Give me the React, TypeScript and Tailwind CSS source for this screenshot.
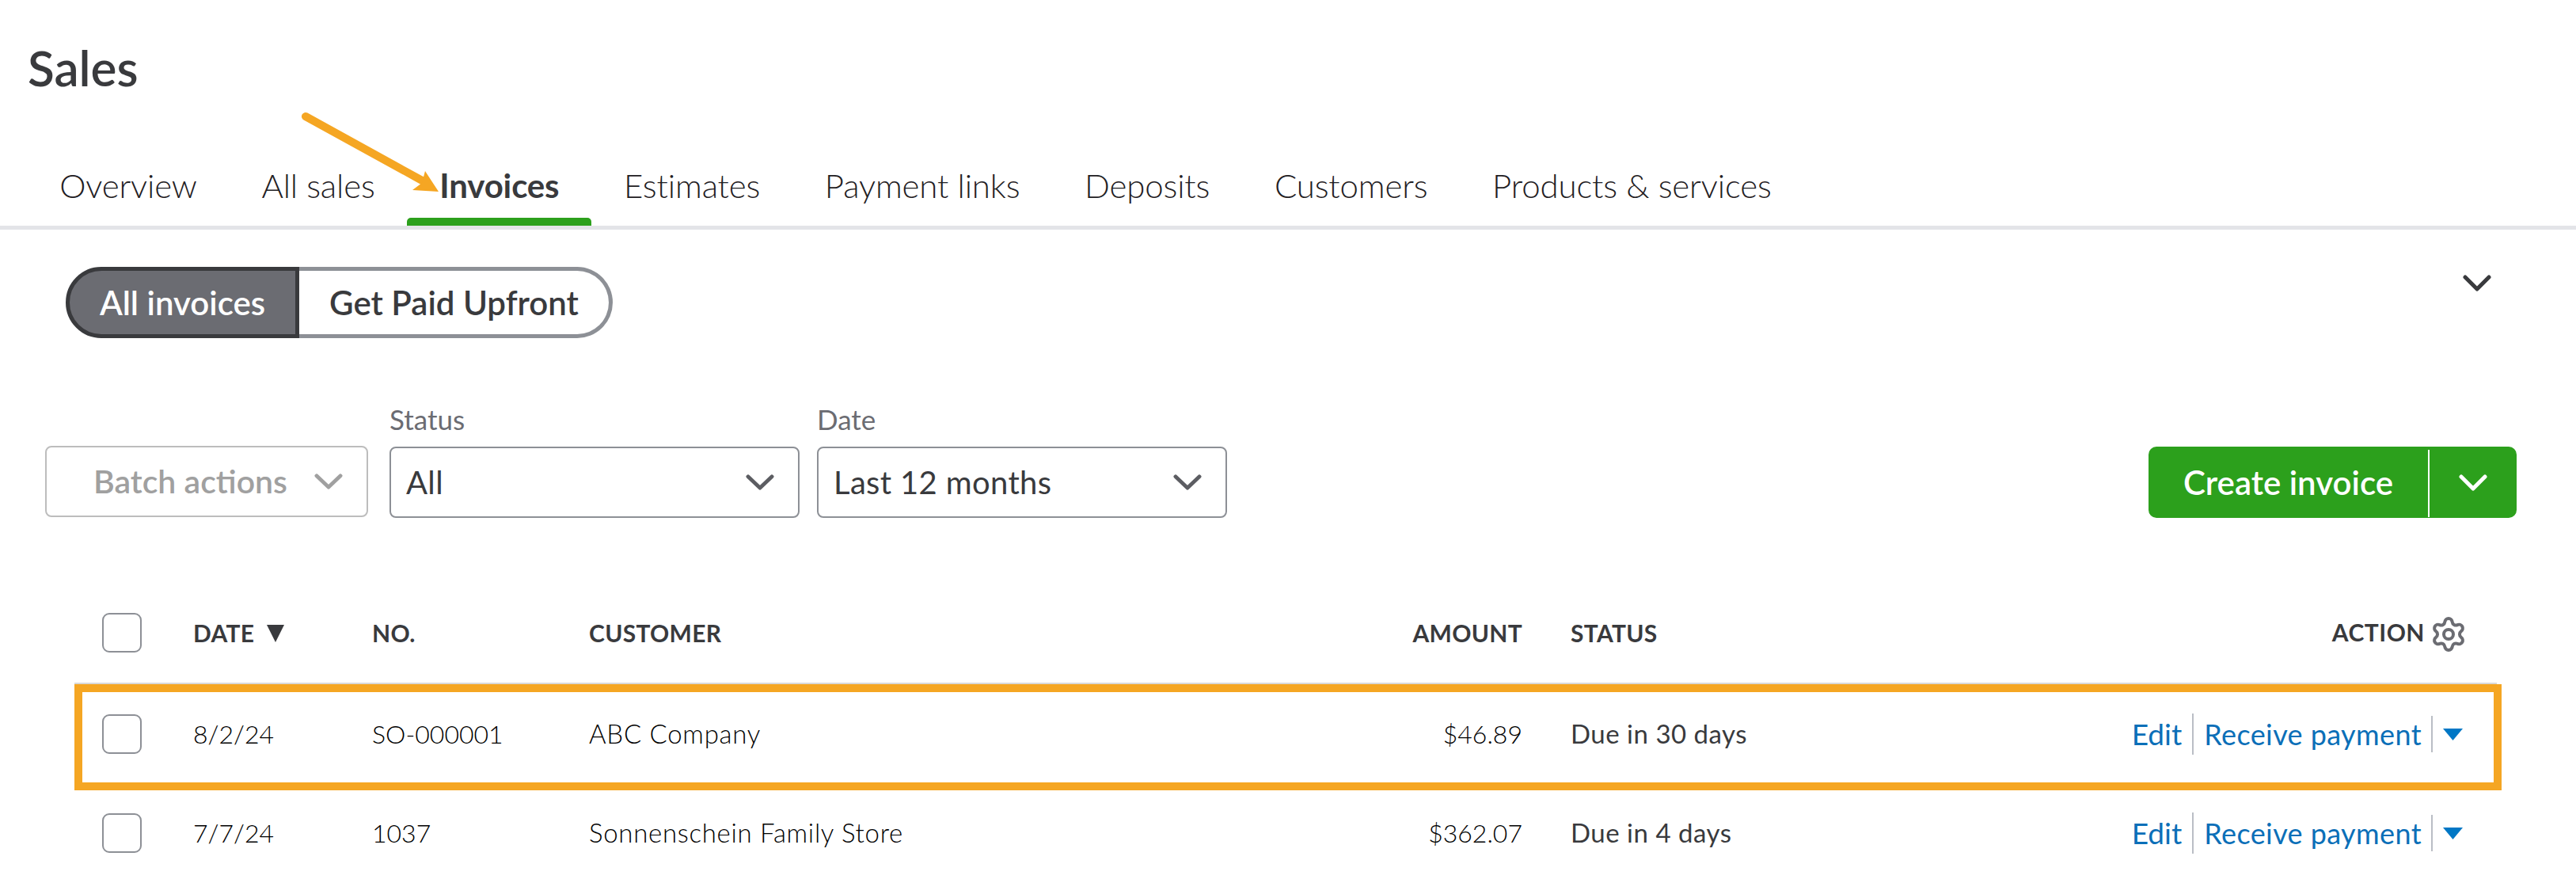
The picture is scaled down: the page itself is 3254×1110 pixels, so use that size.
import { Settings } from "lucide-react";

const tabs = ["Overview", "All sales", "Invoices", "Estimates", "Payment links", "Deposits", "Customers", "Products & services"];

const rowGrid = "grid grid-cols-[115px_226px_274px_956px_223px_677px_1fr] items-center pl-[25px] pr-[39px]";

const rows = [
  { date: "8/2/24", no: "SO-000001", customer: "ABC Company", amount: "$46.89", status: "Due in 30 days", marked: true },
  { date: "7/7/24", no: "1037", customer: "Sonnenschein Family Store", amount: "$362.07", status: "Due in 4 days", marked: false },
];

function Chevron({ className }: { className: string }) {
  return (
    <svg viewBox="0 0 36 21" fill="none" stroke="currentColor" strokeWidth="5" strokeLinecap="round" strokeLinejoin="round" preserveAspectRatio="none" className={className}>
      <polyline points="3,3 18,18 33,3" />
    </svg>
  );
}

function Checkbox() {
  return <div className="w-[50px] h-[50px] rounded-[9px] border-[2.5px] border-[#8d9096] bg-white" />;
}

function Select({ label, value, width }: { label: string; value: string; width: string }) {
  return (
    <div className={width}>
      <div className="text-[35px] leading-[40px] text-[#6b6c72] mb-[15px]">{label}</div>
      <div className="h-[90px] flex items-center justify-between pl-[19px] pr-[30px] rounded-[8px] border-[2.5px] border-[#8d9096] text-[#393a3d]">
        <span className="text-[40px] tracking-[0.35px]">{value}</span>
        <Chevron className="w-[36px] h-[20px] text-[#5c5d62]" />
      </div>
    </div>
  );
}

export default function App() {
  return (
    <div className="relative w-[3254px] h-[1110px] overflow-hidden bg-white text-[#393a3d] font-['Lato',sans-serif]">
      <h1 className="pl-[35px] pt-[55px] text-[62px] leading-[60px] font-semibold">Sales</h1>

      <nav className="flex pl-[34.5px] pt-[98px] border-b-[5px] border-[#e3e4e8]">
        {tabs.map((tab) => (
          <div key={tab} className="flex flex-col">
            <div className={`px-[40.8px] text-[42px] leading-[42px] tracking-[-0.15px] ${tab === "Invoices" ? "font-bold" : "font-light text-[#1f2023]"}`}>{tab}</div>
            <div className={`mt-[20px] h-[10px] rounded-t-[5px] ${tab === "Invoices" ? "bg-[#2ca01c]" : ""}`} />
          </div>
        ))}
      </nav>

      <div className="flex items-start justify-between pl-[83px] pr-[107px] pt-[47px]">
        <div className="flex h-[90px] text-[42px] font-semibold">
          <div className="w-[295px] flex items-center justify-center rounded-l-[45px] border-[5px] border-[#393a3d] bg-[#6b6c72] text-white">All invoices</div>
          <div className="w-[396px] flex items-center justify-center rounded-r-[45px] border-[5px] border-l-0 border-[#8d9096]">Get Paid Upfront</div>
        </div>
        <Chevron className="mt-[10px] w-[36px] h-[21px]" />
      </div>

      <div className="flex items-end pl-[57px] pr-[75px] pt-[82px]">
        <div className="w-[408px] h-[90px] mb-[1px] mr-[27px] flex items-center justify-end pr-[30px] gap-[34px] rounded-[8px] border-[2.5px] border-[#bdbdbd] text-[#a0a0a0]">
          <span className="text-[41px] font-semibold">Batch actions</span>
          <Chevron className="w-[36px] h-[20px]" />
        </div>
        <Select label="Status" value="All" width="w-[518px] mr-[22px]" />
        <Select label="Date" value="Last 12 months" width="w-[518px]" />
        <div className="ml-auto w-[465px] h-[90px] flex items-center rounded-[10px] bg-[#2ca01c] text-white">
          <span className="w-[353px] text-center text-[42px] font-semibold">Create invoice</span>
          <div className="w-[2px] h-[85px] mt-[2px] bg-white" />
          <div className="flex-1 flex justify-center">
            <Chevron className="w-[36px] h-[21px]" />
          </div>
        </div>
      </div>

      <div className="mt-[81px] ml-[94px] w-[3060px] h-[130px] border-b-[3px] border-[#d9d9d9]">
        <div className={`${rowGrid} h-full pl-[35px] pr-[41px] text-[30px] font-bold tracking-[0.3px]`}>
          <Checkbox />
          <div className="mt-[2px] flex items-center gap-[16px]">
            DATE
            <svg viewBox="0 0 22 22" className="w-[22px] h-[22px] fill-[#393a3d]">
              <polygon points="0,0 22,0 11,22" />
            </svg>
          </div>
          <div className="mt-[2px]">NO.</div>
          <div className="mt-[2px]">CUSTOMER</div>
          <div className="mt-[2px] text-right">AMOUNT</div>
          <div className="mt-[2px] pl-[61px]">STATUS</div>
          <div className="flex items-center justify-end gap-[6px] tracking-[0.5px]">
            ACTION
            <Settings className="-mr-[4px] mt-[4px] w-[48px] h-[48px] text-[#6b6c72]" strokeWidth={2} />
          </div>
        </div>
      </div>

      {rows.map((row) => (
        <div
          key={row.date}
          className={`ml-[94px] w-[3066px] border-[10px] ${row.marked ? "-mt-[1px] h-[134px] border-[#f5a623] pb-[8px]" : "h-[108px] border-transparent"}`}
        >
          <div className={`${rowGrid} h-full text-[32px]`}>
            <Checkbox />
            <div className="font-light text-black">{row.date}</div>
            <div className="font-light text-black">{row.no}</div>
            <div className="font-light text-black text-[33px] tracking-[0.7px]">{row.customer}</div>
            <div className="font-light text-black text-right">{row.amount}</div>
            <div className="pl-[61px] text-[33px] tracking-[0.5px]">{row.status}</div>
            <div className="flex items-center justify-end text-[#0b6fb8]">
              <span className="text-[37px]">Edit</span>
              <div className="w-[2px] h-[52px] mx-[13px] bg-[#babec5]" />
              <span className="text-[36px] tracking-[0.4px]">Receive payment</span>
              <div className="w-[2px] h-[46px] ml-[12px] mr-[13px] bg-[#babec5]" />
              <svg viewBox="0 0 25 15" className="w-[25px] h-[15px] fill-[#0077c5]">
                <polygon points="0,0 25,0 12.5,15" />
              </svg>
            </div>
          </div>
        </div>
      ))}

      <svg viewBox="0 0 200 120" className="absolute left-[370px] top-[135px] w-[200px] h-[120px]">
        <line x1="16" y1="12" x2="165" y2="94" stroke="#f5a623" strokeWidth="10" strokeLinecap="round" />
        <polygon points="167,81 184,107 151,105 163,96" fill="#f5a623" />
      </svg>
    </div>
  );
}
